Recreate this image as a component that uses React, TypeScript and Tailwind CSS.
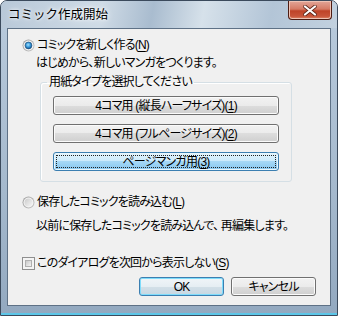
import React from 'react';

const jp = "font-['Liberation_Sans','Noto_Sans_CJK_JP',sans-serif]";

function Radio({ checked }: { checked?: boolean }) {
  return (
    <svg width="13" height="13" viewBox="0 0 13 13" className="shrink-0">
      <defs>
        <linearGradient id="rring" x1="0" y1="0" x2="1" y2="1">
          <stop offset="0" stopColor="#9a9a9a" />
          <stop offset="1" stopColor="#c8c8c8" />
        </linearGradient>
        <linearGradient id="rfill" x1="0" y1="0" x2="1" y2="1">
          <stop offset="0" stopColor="#cbcbcb" />
          <stop offset="1" stopColor="#f7f7f7" />
        </linearGradient>
        <radialGradient id="rdot" cx="0.45" cy="0.4" r="0.6">
          <stop offset="0" stopColor="#a6e0fb" />
          <stop offset="0.5" stopColor="#3d9fe0" />
          <stop offset="1" stopColor="#0f4f8c" />
        </radialGradient>
      </defs>
      <circle cx="6.5" cy="6.5" r="6" fill="url(#rring)" />
      <circle cx="6.5" cy="6.5" r="5" fill="#f4f4f4" />
      <circle cx="6.5" cy="6.5" r="4" fill="url(#rfill)" />
      {checked && <circle cx="6.5" cy="6.5" r="3.4" fill="url(#rdot)" stroke="#1f4f7a" strokeWidth="0.6" />}
    </svg>
  );
}

function Check() {
  return (
    <div className="w-[13px] h-[13px] shrink-0 border border-[#8f8f8f] bg-[#f4f4f4] p-[2px]">
      <div className="w-full h-full bg-[linear-gradient(135deg,#c9c9c9,#f3f3f3)] border border-[#b0b0b0]" />
    </div>
  );
}

const normalBtn =
  'h-[19px] rounded-[3px] border border-[#707070] shadow-[inset_0_0_0_1px_#fbfbfb] bg-[linear-gradient(to_bottom,#f2f2f2_0%,#ebebeb_50%,#dddddd_50%,#cfcfcf_100%)] flex items-center justify-center text-black leading-none';

function U({ children }: { children: React.ReactNode }) {
  return <span className="underline underline-offset-[2px]">{children}</span>;
}

export default function App() {
  return (
    <div className={`w-[338px] h-[316px] ${jp} [font-feature-settings:'palt']`}>
      <div className="w-full h-full flex flex-col rounded-t-[7px] border border-[#3b4a5c] bg-[linear-gradient(to_bottom,#c4d3e1_0%,#b6c8da_10%,#a5b9cd_60%,#93a9c0_100%)] shadow-[inset_0_-2px_0_#5cc6e8]">
        {/* title bar */}
        <div className="h-[27px] flex items-start shrink-0 rounded-t-[6px] bg-[linear-gradient(100deg,#b8c8d8_0%,#cfdbe6_30%,#a9bccf_45%,#d6e1ea_60%,#b3c5d7_80%,#c2d1df_100%)]">
          <div className="pl-[7px] pt-[6px] text-[12.5px] leading-[16px] text-black [font-feature-settings:normal] [text-shadow:0_0_6px_#fff,0_0_3px_#fff]">
            コミック作成開始
          </div>
          <div className="ml-auto mr-[5px] w-[44px] h-[19px] rounded-b-[4px] border border-t-0 border-[#4d1c12] bg-[linear-gradient(to_bottom,#e2a698_0%,#d57a65_45%,#bf4328_55%,#c8553a_85%,#e08a6c_100%)] shadow-[inset_0_0_0_1px_#eec2b4] flex items-center justify-center">
            <svg width="14" height="11" viewBox="0 0 14 11">
              <path d="M2 1.5 L12 9.5 M12 1.5 L2 9.5" stroke="#5a2418" strokeWidth="3.6" strokeLinecap="round" />
              <path d="M2 1.5 L12 9.5 M12 1.5 L2 9.5" stroke="#ffffff" strokeWidth="2.2" strokeLinecap="round" />
            </svg>
          </div>
        </div>

        {/* client area */}
        <div className="mx-[6px] mb-[9px] flex-1 border border-[#5e7186] bg-[#f0f0f0] pl-[14px] pr-[14px] pt-[9px] text-[12px] tracking-[-0.8px] text-black flex flex-col">
          <div className="h-[14px] flex items-center gap-[1px]">
            <Radio checked />
            <span className="ml-[1px] leading-none">コミックを新しく作る(<U>N</U>)</span>
          </div>
          <div className="mt-[4px] h-[14px] flex items-center pl-[14px] leading-none">
            はじめから、新しいマンガをつくります。
          </div>

          <fieldset className="mt-[5px] ml-[18px] w-[252px] border border-[#d5dfe5] rounded-[3px] shadow-[inset_1px_1px_0_#fff] px-[12px] pb-[10px]">
            <legend className="ml-[-6px] px-[2px] h-[14px] leading-[14px]">用紙タイプを選択してください</legend>
            <div className="mt-[7px] flex flex-col gap-[9px]">
              <div className={normalBtn}>4コマ用&nbsp;(縦長ハーフサイズ)(<U>1</U>)</div>
              <div className={normalBtn}>4コマ用&nbsp;(フルページサイズ)(<U>2</U>)</div>
              <div className="h-[19px] rounded-[3px] border border-[#3c7fb1] shadow-[inset_0_0_0_1px_#e8f6fd] bg-[linear-gradient(to_bottom,#e3f4fc_0%,#c9e9fb_50%,#a6d8f6_50%,#86c6ee_100%)] p-[2px]">
                <div className="h-full border border-dotted border-[#222] flex items-center justify-center leading-none">
                  ページマンガ用(<U>3</U>)
                </div>
              </div>
            </div>
          </fieldset>

          <div className="mt-[13px] h-[14px] flex items-center gap-[1px]">
            <Radio />
            <span className="ml-[1px] leading-none">保存したコミックを読み込む(<U>L</U>)</span>
          </div>
          <div className="mt-[10px] h-[14px] flex items-center pl-[14px] leading-none">
            以前に保存したコミックを読み込んで、&nbsp;再編集します。
          </div>

          <div className="mt-[23px] h-[14px] flex items-center gap-[2px]">
            <Check />
            <span className="leading-none">このダイアログを次回から表示しない(<U>S</U>)</span>
          </div>

          <div className="mt-[7px] flex justify-end gap-[7px]">
            <div className="w-[85px] h-[19px] rounded-[3px] border border-[#3c7fb1] shadow-[inset_0_0_0_1px_#7fdcfb] bg-[linear-gradient(to_bottom,#f0f5f8_0%,#e6eef3_50%,#d3e0e8_50%,#c7d7e2_100%)] flex items-center justify-center leading-none">
              OK
            </div>
            <div className={`w-[85px] ${normalBtn}`}>キャンセル</div>
          </div>
        </div>
      </div>
    </div>
  );
}
